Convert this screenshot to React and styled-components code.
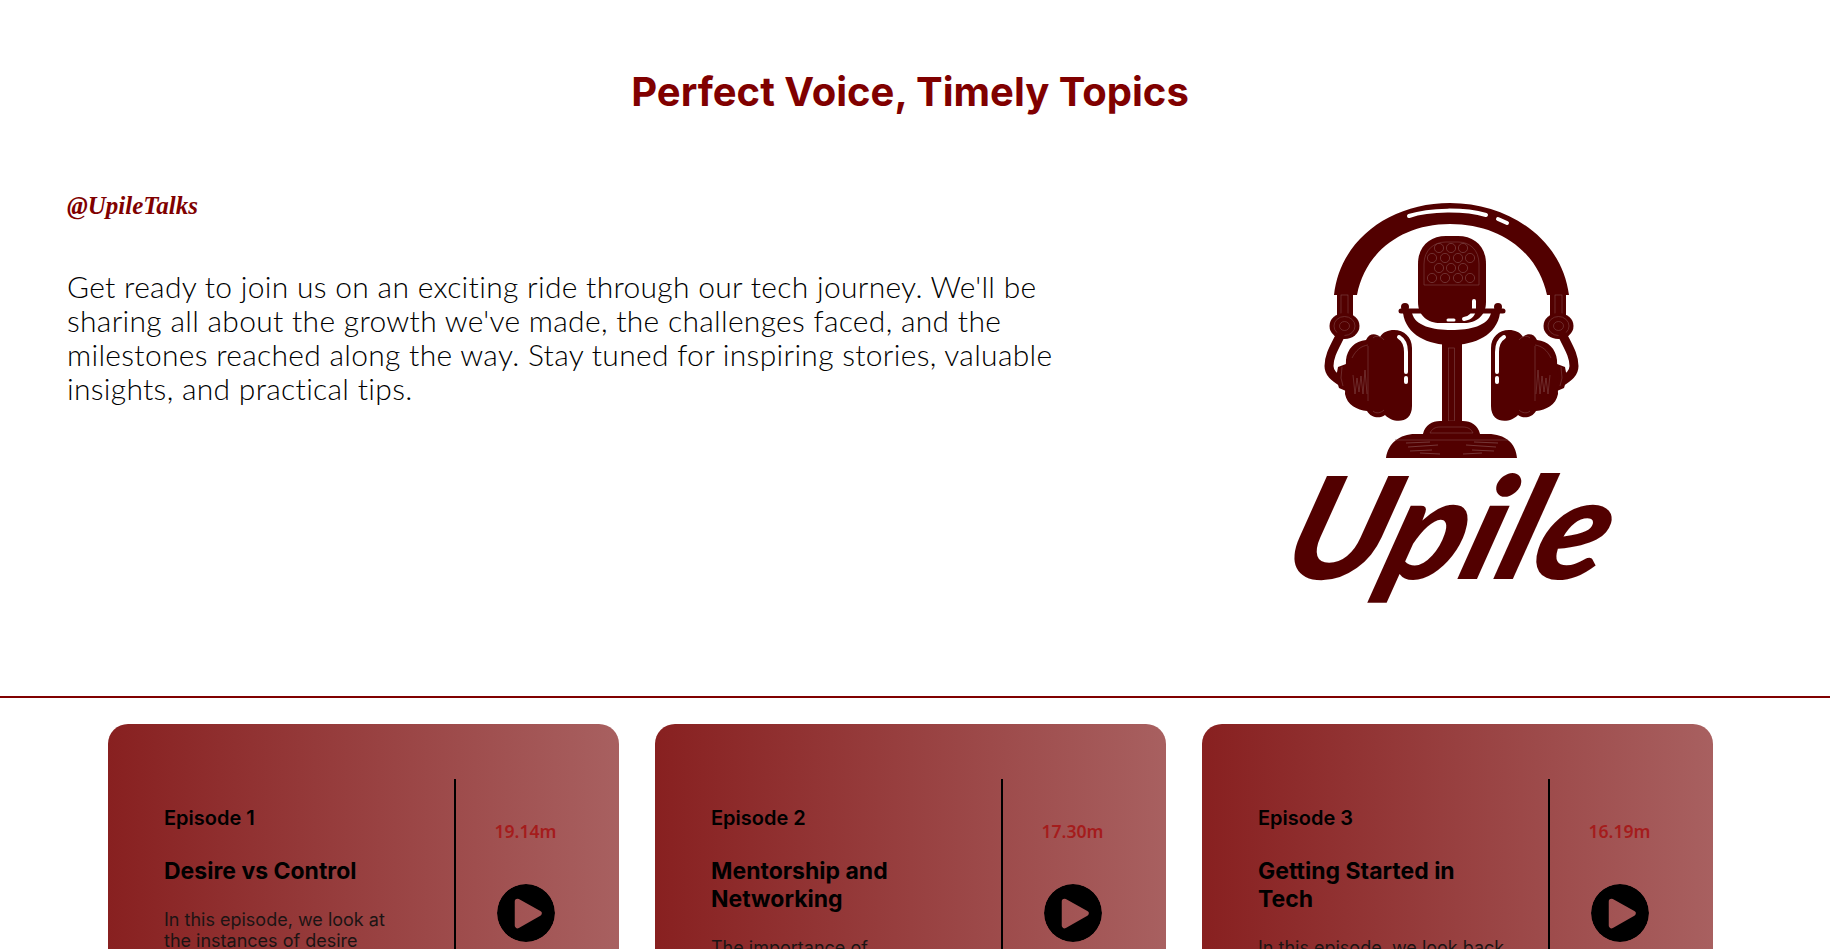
import React from 'react';
import styled, { createGlobalStyle } from 'styled-components';

const GlobalStyle = createGlobalStyle`
   * {
      box-sizing: border-box;
   }

   body {
      margin: 0;
      background: #ffffff;
      overflow-x: hidden;
   }
`;

const Page = styled.div`
   width: 1830px;
`;

const Heading = styled.h1`
   margin: 0;
   padding: 68px 10px 0 0;
   font-family: 'Inter', sans-serif;
   font-size: 40px;
   line-height: 48px;
   font-weight: 700;
   text-align: center;
   color: #800000;
`;

const Hero = styled.section`
   display: grid;
   grid-template-columns: 1010px 400px;
   column-gap: 183px;
   padding: 64px 0 56px 67px;
   border-bottom: 2px solid #800000;
`;

const Intro = styled.div`
   padding-top: 11px;
`;

const Handle = styled.h3`
   margin: 0 0 49px;
   font-family: 'Liberation Serif', serif;
   font-size: 25px;
   line-height: 29px;
   font-weight: 700;
   font-style: italic;
   color: #800000;
`;

const Blurb = styled.p`
   margin: 0;
   font-family: 'Lato', sans-serif;
   font-size: 30px;
   line-height: 34px;
   font-weight: 300;
   letter-spacing: 0.3px;
   color: #000000;
`;

const EpisodeRow = styled.section`
   display: grid;
   grid-template-columns: repeat(3, 511px);
   column-gap: 36px;
   padding: 26px 0 40px 108px;
`;

const Card = styled.article`
   display: flex;
   padding: 55px 24px 55px 56px;
   border-radius: 20px;
   background: linear-gradient(90deg, #882020 0%, #a86060 100%);
`;

const CardText = styled.div`
   width: 290px;
   padding: 28px 42px 0 0;
`;

const EpisodeLabel = styled.h4`
   margin: 0 0 28px;
   font-family: 'Inter', sans-serif;
   font-size: 20px;
   line-height: 22px;
   font-weight: 600;
   color: #000000;
`;

const EpisodeTitle = styled.h3`
   margin: 0 0 24px;
   font-family: 'Inter', sans-serif;
   font-size: 23px;
   line-height: 28px;
   font-weight: 700;
   color: #000000;
`;

const EpisodeBlurb = styled.p`
   margin: 0;
   font-family: 'Inter', sans-serif;
   font-size: 18px;
   line-height: 21px;
   font-weight: 400;
   color: #1c1414;
`;

const CardSide = styled.div`
   flex: 1;
   display: flex;
   flex-direction: column;
   align-items: center;
   gap: 41px;
   padding-top: 41px;
   border-left: 2px solid #000000;
`;

const Duration = styled.span`
   font-family: 'Noto Sans', sans-serif;
   font-size: 17.6px;
   line-height: 23px;
   font-weight: 600;
   color: #a51c1c;
`;

const PlayButton = styled.button`
   width: 58px;
   height: 58px;
   padding: 0;
   border: 0;
   background: none;
   display: block;
`;

const episodes = [
   {
      label: 'Episode 1',
      title: 'Desire vs Control',
      blurb: 'In this episode, we look at the instances of desire versus control in a career.',
      time: '19.14m',
   },
   {
      label: 'Episode 2',
      title: 'Mentorship and Networking',
      blurb: 'The importance of mentorship and networking in tech.',
      time: '17.30m',
   },
   {
      label: 'Episode 3',
      title: 'Getting Started in Tech',
      blurb: 'In this episode, we look back at how we got started.',
      time: '16.19m',
   },
];

const PlayIcon = () => (
   <svg width="58" height="58" viewBox="0 0 58 58" aria-hidden="true">
      <mask id="play-cutout">
         <circle cx="29" cy="29" r="29" fill="#fff" />
         <polygon
            points="20.5,17.5 42,29.4 20.5,41.5"
            fill="#000"
            stroke="#000"
            strokeWidth="5.5"
            strokeLinejoin="round"
         />
      </mask>
      <circle cx="29" cy="29" r="29" fill="#000" mask="url(#play-cutout)" />
   </svg>
);

const LOGO = '#520000';
const FINE = '#7d4545';

const EarCup = ({ flip }) => (
   <g transform={flip ? 'translate(383 0) scale(-1 1)' : undefined}>
      <rect x="77" y="112" width="16" height="28" fill={LOGO} />
      <rect x="81" y="115" width="7" height="20" fill="none" stroke={FINE} strokeWidth="0.6" />
      <ellipse cx="84.5" cy="146" rx="15" ry="13" fill={LOGO} />
      <ellipse cx="84.5" cy="146" rx="10.5" ry="9.5" fill="none" stroke={FINE} strokeWidth="0.6" />
      <ellipse cx="84.5" cy="146" rx="5" ry="4.5" fill="none" stroke={FINE} strokeWidth="0.6" />
      <path
         d="M80 156 C74 168 69 176 69 186 C69 193 74 197 82 202"
         fill="none"
         stroke={LOGO}
         strokeWidth="9"
         strokeLinecap="round"
      />
      <path d="M86 184 L78 187 L76 198 L79 208 L86 211 Z" fill={LOGO} />
      <path d="M82 187 L81 198 L83 206" fill="none" stroke={FINE} strokeWidth="0.6" />
      <path
         d="M152 168 C152 157 144 150 134 150 C128 150 123 152 120 157 C116 153 109 153 106 160
            C95 161 87 169 86 180 L85 214 C87 225 97 230 107 231 C111 238 120 239 125 235
            C132 243 152 245 152 226 Z"
         fill={LOGO}
      />
      <path d="M139 157 C144 160 146 165 146 172 L146 192" fill="none" stroke="#fff" strokeWidth="4" strokeLinecap="round" />
      <path d="M146 198 L146 202" fill="none" stroke="#fff" strokeWidth="4" strokeLinecap="round" />
      <path d="M108 166 L108 221 M92 178 C96 170 101 166 108 165" fill="none" stroke={FINE} strokeWidth="0.6" />
      <path
         d="M93 195 L95 214 L97 198 L99 212 L101 196 L103 214 L105 190 L107 214"
         fill="none"
         stroke={FINE}
         strokeWidth="0.6"
      />
      <path d="M113 158 C116 155 121 156 124 160 M113 231 C116 234 121 233 124 230" fill="none" stroke={FINE} strokeWidth="0.6" />
   </g>
);

const grilleRows = [
   { y: 68, xs: [179, 191, 203] },
   { y: 78, xs: [172, 185, 198, 210] },
   { y: 88, xs: [179, 191, 203] },
   { y: 98, xs: [172, 185, 198, 210] },
];

const UpileLogo = () => (
   <svg width="400" height="460" viewBox="0 0 400 460" role="img" aria-label="Upile logo">
      {/* headband */}
      <path
         d="M74 115 C80 60 130 23 190 23 C250 23 302 60 309 115 L287 115 C278 72 240 44 190 44 C142 44 105 72 97 115 Z"
         fill={LOGO}
      />
      <path d="M149 36 C170 29 205 29 226 35" fill="none" stroke="#fff" strokeWidth="4" strokeLinecap="round" />
      <path d="M238 39 L247 43" fill="none" stroke="#fff" strokeWidth="4" strokeLinecap="round" />

      <EarCup />
      <EarCup flip />

      {/* cradle, the gap under the mic is just the empty page */}
      <path
         d="M143 133 C146 155 168 165 191.5 165 C215 165 237 155 240 133 L231 133 C228 146 210 150 191.5 150 C173 150 155 146 152 133 Z"
         fill={LOGO}
      />

      {/* microphone head */}
      <path
         d="M158 84 C158 66 170 56 186 56 L198 56 C214 56 226 66 226 84 L226 122 C226 136 216 143 204 143 L180 143 C168 143 158 136 158 122 Z"
         fill={LOGO}
      />
      <path
         d="M164 105 L164 84 C164 70 174 62 186 62 L198 62 C210 62 219 70 219 84 L219 105 Z"
         fill="none"
         stroke={FINE}
         strokeWidth="0.6"
      />
      {grilleRows.map(row =>
         row.xs.map(x => (
            <circle key={`${row.y}-${x}`} cx={x} cy={row.y} r="4.6" fill="none" stroke={FINE} strokeWidth="0.7" />
         )),
      )}
      <path d="M214 121 L214 128 C214 135 210 138 204 139" fill="none" stroke="#fff" strokeWidth="4" strokeLinecap="round" />
      <path d="M188 140 L194 140" fill="none" stroke="#fff" strokeWidth="3" strokeLinecap="round" />
      <path d="M141 131 L243 131" stroke={LOGO} strokeWidth="5" strokeLinecap="round" />
      <circle cx="145" cy="127" r="4" fill={LOGO} />
      <circle cx="238" cy="127" r="4" fill={LOGO} />

      {/* stand and base */}
      <rect x="182" y="163" width="20" height="82" fill={LOGO} />
      <rect x="188.5" y="168" width="6" height="73" fill="none" stroke={FINE} strokeWidth="0.6" />
      <path
         d="M126 278 C128 263 140 254 155 254 L163 254 C165 245 172 241 180 241 L203 241 C211 241 218 245 220 254 L228 254 C245 254 256 263 257 278 Z"
         fill={LOGO}
      />
      <path
         d="M170 253 C172 249 175 247 180 247 L203 247 C208 247 211 249 213 253 Z M135 260 L248 260"
         fill="none"
         stroke={FINE}
         strokeWidth="0.6"
      />
      <path
         d="M146 263 L170 262 M148 267 L178 265 M150 271 L172 270 M160 273 L180 274 M214 262 L238 263 M206 265 L236 267 M212 270 L234 271 M203 274 L222 273"
         fill="none"
         stroke={FINE}
         strokeWidth="0.8"
      />

      {/* wordmark */}
      <text
         transform="translate(17 399) skewX(-18) scale(1.02 1)"
         fontFamily="'Lato', sans-serif"
         fontSize="142"
         fontWeight="900"
         fontStyle="italic"
         fill={LOGO}
      >
         Upile
      </text>
   </svg>
);

const App = () => (
   <Page>
      <GlobalStyle />
      <Heading>Perfect Voice, Timely Topics</Heading>
      <Hero>
         <Intro>
            <Handle>@UpileTalks</Handle>
            <Blurb>
               Get ready to join us on an exciting ride through our tech journey. We'll be sharing all about the growth
               we've made, the challenges faced, and the milestones reached along the way. Stay tuned for inspiring
               stories, valuable insights, and practical tips.
            </Blurb>
         </Intro>
         <UpileLogo />
      </Hero>
      <EpisodeRow>
         {episodes.map(episode => (
            <Card key={episode.label}>
               <CardText>
                  <EpisodeLabel>{episode.label}</EpisodeLabel>
                  <EpisodeTitle>{episode.title}</EpisodeTitle>
                  <EpisodeBlurb>{episode.blurb}</EpisodeBlurb>
               </CardText>
               <CardSide>
                  <Duration>{episode.time}</Duration>
                  <PlayButton aria-label={`Play ${episode.label}`}>
                     <PlayIcon />
                  </PlayButton>
               </CardSide>
            </Card>
         ))}
      </EpisodeRow>
   </Page>
);

export default App;
